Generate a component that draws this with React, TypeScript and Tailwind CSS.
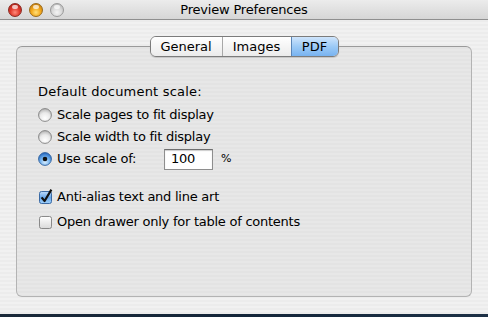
import React from 'react'

function Light({ tone }: { tone: 'red' | 'yellow' | 'gray' }) {
  const styles = {
    red: 'bg-[radial-gradient(circle_at_50%_70%,#ff8a7a_0%,#e0392c_45%,#a31a12_100%)] border-[#8a2a22]',
    yellow: 'bg-[radial-gradient(circle_at_50%_70%,#ffe07a_0%,#f2a81c_45%,#b86e08_100%)] border-[#9a6a1a]',
    gray: 'bg-[radial-gradient(circle_at_50%_70%,#f4f4f4_0%,#d6d6d6_50%,#a9a9a9_100%)] border-[#9a9a9a]',
  }
  return (
    <div className={`relative w-[14px] h-[14px] rounded-full border ${styles[tone]}`}>
      <div className="absolute left-[3px] top-[1px] w-[6px] h-[4px] rounded-full bg-white/70" />
    </div>
  )
}

function Radio({ on }: { on?: boolean }) {
  return (
    <svg width="14" height="14" viewBox="0 0 14 14" className="shrink-0">
      <defs>
        <radialGradient id="rOff" cx="50%" cy="75%" r="70%">
          <stop offset="0%" stopColor="#ffffff" />
          <stop offset="60%" stopColor="#e9e9e9" />
          <stop offset="100%" stopColor="#b9b9b9" />
        </radialGradient>
        <radialGradient id="rOn" cx="50%" cy="75%" r="70%">
          <stop offset="0%" stopColor="#d6ecff" />
          <stop offset="55%" stopColor="#6fb0ee" />
          <stop offset="100%" stopColor="#2a6bc0" />
        </radialGradient>
      </defs>
      <circle cx="7" cy="7" r="6.4" fill={on ? 'url(#rOn)' : 'url(#rOff)'} stroke={on ? '#2d5f9c' : '#7e7e7e'} strokeWidth="0.9" />
      {on && <circle cx="7" cy="7" r="2.3" fill="#111" />}
    </svg>
  )
}

function Check({ on }: { on?: boolean }) {
  return (
    <svg width="15" height="15" viewBox="0 0 15 15" className="shrink-0 overflow-visible">
      <defs>
        <linearGradient id="cOff" x1="0" y1="0" x2="0" y2="1">
          <stop offset="0%" stopColor="#ffffff" />
          <stop offset="100%" stopColor="#d9d9d9" />
        </linearGradient>
        <linearGradient id="cOn" x1="0" y1="0" x2="0" y2="1">
          <stop offset="0%" stopColor="#bfdcfa" />
          <stop offset="50%" stopColor="#6aa8ea" />
          <stop offset="100%" stopColor="#9fd0fb" />
        </linearGradient>
      </defs>
      <rect x="1.5" y="2.5" width="12" height="12" rx="2" fill={on ? 'url(#cOn)' : 'url(#cOff)'} stroke={on ? '#2d5f9c' : '#7e7e7e'} strokeWidth="0.9" />
      {on && <path d="M3.6 8.4 L6.6 12 L13.4 0.6" fill="none" stroke="#111" strokeWidth="2.2" strokeLinejoin="round" />}
    </svg>
  )
}

export default function App() {
  return (
    <div className="w-[488px] h-[317px] flex flex-col overflow-hidden font-['DejaVu_Sans',sans-serif] text-[13px] text-black">
      {/* title bar */}
      <div className="h-[20px] grid grid-cols-[1fr_auto_1fr] items-center border-b border-[#8f8f8f] bg-gradient-to-b from-[#ececec] to-[#d6d6d6]">
        <div className="flex items-center gap-[7px] pl-[8px]">
          <Light tone="red" />
          <Light tone="yellow" />
          <Light tone="gray" />
        </div>
        <div className="text-[13px] leading-none tracking-[-0.2px]">Preview Preferences</div>
        <div />
      </div>

      {/* body */}
      <div className="flex-1 flex flex-col pt-[16px] px-[16px] pb-[17px] bg-[repeating-linear-gradient(180deg,#ececec_0px,#ececec_2px,#f1f1f1_2px,#f1f1f1_4px)]">
        <div className="relative z-10 -mb-[11px] flex justify-center">
          <div className="flex h-[21px] rounded-[6px] border border-[#7c7c7c] overflow-hidden shadow-[0_1px_1px_rgba(0,0,0,0.15)]">
            <div className="w-[72px] flex items-center justify-center bg-gradient-to-b from-[#ffffff] to-[#ebebeb] border-r border-[#a8a8a8]">General</div>
            <div className="w-[68px] flex items-center justify-center bg-gradient-to-b from-[#ffffff] to-[#ebebeb]">Images</div>
            <div className="w-[47px] flex items-center justify-center bg-gradient-to-b from-[#cfe5fc] via-[#9ccaf6] to-[#78b3f0] border-l border-[#5a86b8]">PDF</div>
          </div>
        </div>

        <div className="flex-1 flex flex-col rounded-[6px] border border-[#b3b3b3] border-t-[#9a9a9a] pt-[37px] pl-[21px] tracking-[-0.25px] bg-[repeating-linear-gradient(180deg,#e3e3e3_0px,#e3e3e3_2px,#e7e7e7_2px,#e7e7e7_4px)]">
          <div className="h-[16px] leading-[16px] tracking-[0.2px]">Default document scale:</div>
          <div className="mt-[4px] h-[22px] flex items-center gap-[5px]">
            <Radio />
            <span>Scale pages to fit display</span>
          </div>
          <div className="h-[22px] flex items-center gap-[5px]">
            <Radio />
            <span>Scale width to fit display</span>
          </div>
          <div className="h-[22px] flex items-center">
            <Radio on />
            <span className="ml-[5px] w-[107px]">Use scale of:</span>
            <div className="w-[49px] h-[21px] flex items-center pl-[6px] bg-white border border-[#8e8e8e] border-t-[#6e6e6e] shadow-[inset_0_1px_1px_rgba(0,0,0,0.2)]">100</div>
            <span className="ml-[8px] text-[11px]">%</span>
          </div>
          <div className="mt-[14px] h-[25px] flex items-center gap-[4px]">
            <Check on />
            <span>Anti-alias text and line art</span>
          </div>
          <div className="h-[25px] flex items-center gap-[4px]">
            <Check />
            <span>Open drawer only for table of contents</span>
          </div>
        </div>
      </div>

      <div className="h-[3px] bg-gradient-to-r from-[#1b2a3a] via-[#14263a] to-[#1d3146]" />
    </div>
  )
}
